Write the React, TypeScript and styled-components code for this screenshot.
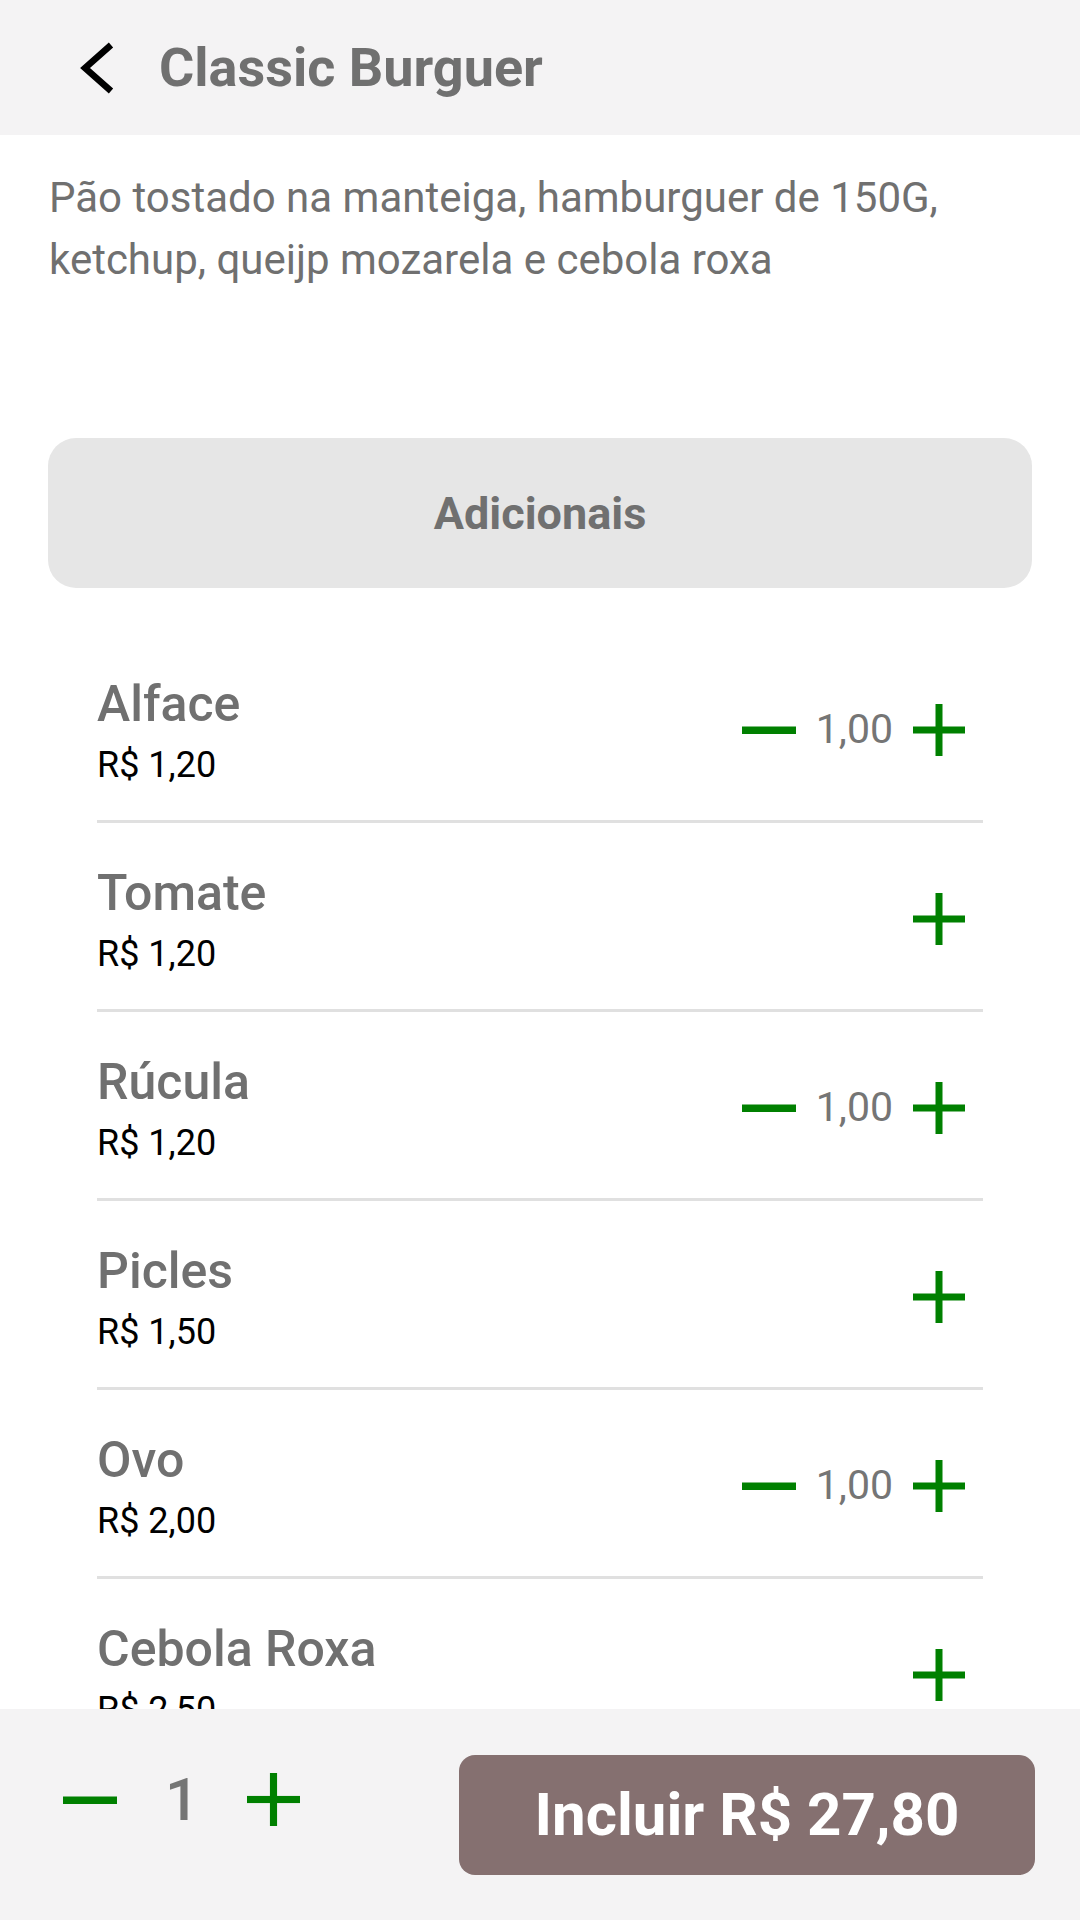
import React from "react";
import styled, { createGlobalStyle } from "styled-components";

const GlobalStyle = createGlobalStyle`
  html, body {
    margin: 0;
    padding: 0;
    background: #ffffff;
    font-family: Roboto, "Noto Sans", "Liberation Sans", sans-serif;
  }
  body {
    overflow: hidden;
  }
  * {
    box-sizing: border-box;
  }
`;

const GREEN = "#008000";

const Page = styled.div`
  width: 1080px;
  min-height: 1920px;
  display: flex;
  flex-direction: column;
  background: #ffffff;
`;

const Header = styled.header`
  height: 135px;
  background: #f4f3f4;
  display: flex;
  align-items: center;
  padding-left: 78px;
  gap: 43px;
`;

const BackButton = styled.button`
  border: none;
  background: transparent;
  padding: 0;
  width: 38px;
  height: 56px;
  display: flex;
  cursor: pointer;
`;

const Title = styled.h1`
  margin: 0;
  font-size: 54px;
  font-weight: 700;
  color: #707070;
  line-height: 1.172;
`;

const Description = styled.p`
  margin: 32px 49px 0 49px;
  font-size: 42px;
  line-height: 62px;
  font-weight: 400;
  color: #707070;
`;

const SectionBox = styled.div`
  margin: 147px 48px 0 48px;
  height: 150px;
  border-radius: 28px;
  background: #e6e6e6;
  display: flex;
  align-items: center;
  justify-content: center;
  font-size: 45px;
  font-weight: 700;
  color: #707070;
`;

const List = styled.ul`
  list-style: none;
  margin: 46px 97px 0 97px;
  padding: 0;
`;

const Row = styled.li`
  display: flex;
  align-items: center;
  justify-content: space-between;
  padding: 40px 18px 35px 0;
  border-bottom: 3px solid #e0e0e0;
`;

const ItemInfo = styled.div`
  display: flex;
  flex-direction: column;
`;

const ItemName = styled.span`
  font-size: 50px;
  font-weight: 500;
  line-height: 60px;
  color: #707070;
`;

const ItemPrice = styled.span`
  margin-top: 11px;
  font-size: 36px;
  font-weight: 400;
  line-height: 40px;
  color: #000000;
`;

const Controls = styled.div`
  display: flex;
  align-items: center;
  gap: 20px;
`;

const Qty = styled.span`
  font-size: 41px;
  line-height: 1;
  font-weight: 400;
  color: #757575;
`;

const IconButton = styled.button`
  border: none;
  background: transparent;
  padding: 0;
  display: flex;
  cursor: pointer;
`;

const BottomBar = styled.footer`
  position: fixed;
  left: 0;
  right: 0;
  bottom: 0;
  height: 211px;
  background: #f4f3f4;
  display: flex;
  align-items: center;
  justify-content: space-between;
  padding: 0 45px 0 63px;
`;

const Stepper = styled.div`
  display: flex;
  align-items: center;
  gap: 48px;
  margin-bottom: 30px;
`;

const StepperValue = styled.span`
  font-size: 60px;
  font-weight: 500;
  line-height: 1;
  color: #757575;
`;

const AddButton = styled.button`
  width: 576px;
  height: 120px;
  border: none;
  border-radius: 16px;
  background: #857070;
  color: #ffffff;
  font-family: Roboto, "Noto Sans", "Liberation Sans", sans-serif;
  font-size: 60px;
  font-weight: 700;
  cursor: pointer;
`;

const ChevronLeft = () => (
  <svg width="38" height="56" viewBox="0 0 38 56" aria-hidden="true">
    <polyline
      points="33,5 7,28 33,51"
      fill="none"
      stroke="#000"
      strokeWidth="6.5"
      strokeLinejoin="miter"
    />
  </svg>
);

const PlusIcon = ({ size = 52 }: { size?: number }) => (
  <svg width={size} height={size} viewBox="0 0 52 52" aria-hidden="true">
    <rect x="0" y="22.5" width="52" height="7" fill={GREEN} />
    <rect x="22.5" y="0" width="7" height="52" fill={GREEN} />
  </svg>
);

const MinusIcon = ({ width = 54 }: { width?: number }) => (
  <svg width={width} height="52" viewBox={`0 0 ${width} 52`} aria-hidden="true">
    <rect x="0" y="22.5" width={width} height="7.5" fill={GREEN} />
  </svg>
);

type Item = { name: string; price: string; qty?: string };

const items: Item[] = [
  { name: "Alface", price: "R$ 1,20", qty: "1,00" },
  { name: "Tomate", price: "R$ 1,20" },
  { name: "Rúcula", price: "R$ 1,20", qty: "1,00" },
  { name: "Picles", price: "R$ 1,50" },
  { name: "Ovo", price: "R$ 2,00", qty: "1,00" },
  { name: "Cebola Roxa", price: "R$ 2,50" },
];

export default function App() {
  return (
    <>
      <GlobalStyle />
      <Page>
        <Header>
          <BackButton aria-label="Voltar">
            <ChevronLeft />
          </BackButton>
          <Title>Classic Burguer</Title>
        </Header>
        <Description>
          Pão tostado na manteiga, hamburguer de 150G, ketchup, queijp mozarela e cebola roxa
        </Description>
        <SectionBox>Adicionais</SectionBox>
        <List>
          {items.map((item) => (
            <Row key={item.name}>
              <ItemInfo>
                <ItemName>{item.name}</ItemName>
                <ItemPrice>{item.price}</ItemPrice>
              </ItemInfo>
              <Controls>
                {item.qty && (
                  <>
                    <IconButton aria-label="Remover">
                      <MinusIcon />
                    </IconButton>
                    <Qty>{item.qty}</Qty>
                  </>
                )}
                <IconButton aria-label="Adicionar">
                  <PlusIcon />
                </IconButton>
              </Controls>
            </Row>
          ))}
        </List>
      </Page>
      <BottomBar>
        <Stepper>
          <IconButton aria-label="Diminuir">
            <MinusIcon />
          </IconButton>
          <StepperValue>1</StepperValue>
          <IconButton aria-label="Aumentar">
            <PlusIcon size={53} />
          </IconButton>
        </Stepper>
        <AddButton>Incluir R$ 27,80</AddButton>
      </BottomBar>
    </>
  );
}
